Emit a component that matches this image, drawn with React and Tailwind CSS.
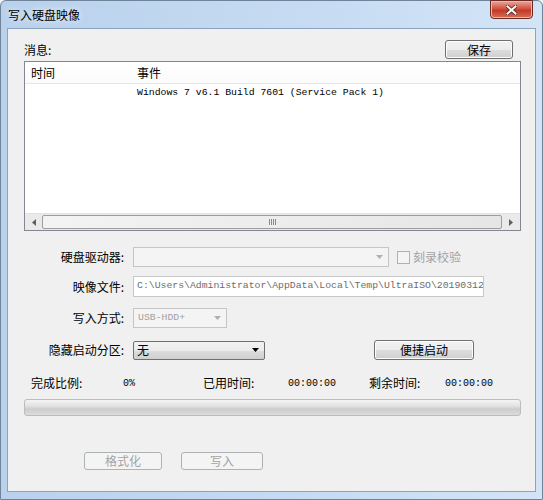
const cjk = { fontFamily: '"Noto Sans CJK SC", "Noto Sans", sans-serif' };
const mono = { fontFamily: '"Liberation Mono", monospace' };

const Btn = ({ children, disabled, className = '' }) => (
    <div
        className={`flex items-center justify-center rounded-[3px] border text-[12px] leading-none ${
            disabled
                ? 'border-[#adb2b5] bg-[#f4f4f4] text-[#a3a3a3]'
                : 'border-[#707070] bg-[linear-gradient(#f2f2f2_0%,#ebebeb_50%,#dddddd_51%,#cfcfcf_100%)] text-black shadow-[inset_0_0_0_1px_#fcfcfc]'
        } ${className}`}
        style={cjk}
    >
        {children}
    </div>
);

const Arrow = ({ color = '#000', size = 3 }) => (
    <svg width={size * 2 + 1} height={size + 1} viewBox={`0 0 ${size * 2 + 1} ${size + 1}`}>
        <polygon points={`0,0 ${size * 2 + 1},0 ${size + 0.5},${size + 1}`} fill={color} />
    </svg>
);

const Label = ({ children }) => (
    <div className="w-[101px] text-right text-[12px] text-black pr-[1px]" style={cjk}>
        {children}
    </div>
);

export default function App() {
    return (
        <div className="w-[543px] h-[500px] bg-[#eef3f8]">
            <div className="w-[543px] h-[500px] flex flex-col rounded-t-[6px] border border-[#6f8399] bg-[linear-gradient(90deg,#b9d1ec,#c7dcf3_60%,#d3e4f6)]">
                {/* title bar */}
                <div className="h-[27px] flex items-start justify-between pl-[7px] pr-[9px]">
                    <div className="pt-[5px] text-[12px] text-black [text-shadow:0_0_6px_#ffffff]" style={cjk}>
                        写入硬盘映像
                    </div>
                    <div className="w-[43px] h-[19px] -mt-[1px] rounded-b-[4px] border border-[#6b2b24] bg-[linear-gradient(#e9a99c,#d2523f_45%,#c23a28_55%,#d96e55)] flex items-center justify-center shadow-[inset_0_0_0_1px_#f0b7ab]">
                        <svg width="11" height="10" viewBox="0 0 11 10">
                            <path d="M1.5 1.5 L9.5 8.5 M9.5 1.5 L1.5 8.5" stroke="#4a1a14" strokeWidth="3.4" strokeLinecap="square" />
                            <path d="M1.5 1.5 L9.5 8.5 M9.5 1.5 L1.5 8.5" stroke="#ffffff" strokeWidth="2" strokeLinecap="square" />
                        </svg>
                    </div>
                </div>

                {/* client area */}
                <div className="mx-[6px] mb-[7px] flex-1 border border-[#8ba3bf] bg-[#f0f0f0] pl-[16px] pt-[11px]">
                    <div className="w-[497px] flex items-center justify-between">
                        <div className="text-[12px] text-black pt-[1px]" style={cjk}>消息:</div>
                        <Btn className="w-[68px] h-[19px] mr-[8px]">保存</Btn>
                    </div>

                    {/* list view */}
                    <div className="mt-[2px] w-[497px] h-[170px] border border-[#828790] bg-white flex flex-col">
                        <div className="h-[22px] flex items-center border-b border-[#e5e5e5] bg-[linear-gradient(#ffffff,#fbfbfb)] text-[12px]" style={cjk}>
                            <div className="w-[112px] pl-[6px]">时间</div>
                            <div>事件</div>
                        </div>
                        <div className="h-[16px] flex items-center pl-[112px] pt-[3px] text-[9.8px] text-black whitespace-pre" style={mono}>
                            Windows 7 v6.1 Build 7601 (Service Pack 1)
                        </div>
                        <div className="flex-1" />
                        <div className="h-[17px] flex bg-[#eaeaea] border-t border-[#e2e2e2]">
                            <div className="w-[17px] flex items-center justify-center">
                                <svg width="4" height="7" viewBox="0 0 4 7">
                                    <polygon points="4,0 4,7 0,3.5" fill="#606060" />
                                </svg>
                            </div>
                            <div className="flex-1 my-[1px] rounded-[2px] border border-[#9d9d9d] bg-[linear-gradient(90deg,#f3f3f3,#e6e6e6)] bg-[linear-gradient(#f5f5f5,#e5e5e5_50%,#d7d7d7_51%,#cfcfcf)] flex items-center justify-center">
                                <div className="flex gap-[1px]">
                                    <div className="w-[1px] h-[6px] bg-[#8a8a8a]" />
                                    <div className="w-[1px] h-[6px] bg-[#8a8a8a]" />
                                    <div className="w-[1px] h-[6px] bg-[#8a8a8a]" />
                                    <div className="w-[1px] h-[6px] bg-[#8a8a8a]" />
                                </div>
                            </div>
                            <div className="w-[18px] flex items-center justify-center">
                                <svg width="4" height="7" viewBox="0 0 4 7">
                                    <polygon points="0,0 0,7 4,3.5" fill="#606060" />
                                </svg>
                            </div>
                        </div>
                    </div>

                    {/* row 1 */}
                    <div className="mt-[16px] flex items-center">
                        <Label>硬盘驱动器:</Label>
                        <div className="ml-[8px] w-[256px] h-[20px] border border-[#c5c5c5] bg-[#f4f4f4] flex items-center justify-end pr-[5px]">
                            <Arrow color="#b0b0b0" size={3} />
                        </div>
                        <div className="ml-[8px] w-[13px] h-[13px] border border-[#b1b1b1] bg-[#f4f4f4]" />
                        <div className="ml-[3px] text-[12px] text-[#a3a3a3]" style={cjk}>刻录校验</div>
                    </div>

                    {/* row 2 */}
                    <div className="mt-[9px] flex items-center">
                        <Label>映像文件:</Label>
                        <div className="ml-[8px] w-[351px] h-[21px] border border-[#c7c7c7] bg-white overflow-hidden flex items-center pl-[3px] text-[9.8px] text-[#6d6d6d] whitespace-pre" style={mono}>
                            C:\Users\Administrator\AppData\Local\Temp\UltraISO\20190312
                        </div>
                    </div>

                    {/* row 3 */}
                    <div className="mt-[11px] flex items-center">
                        <Label>写入方式:</Label>
                        <div className="ml-[8px] w-[94px] h-[20px] border border-[#c5c5c5] bg-[#f4f4f4] flex items-center justify-between pl-[4px] pr-[5px]">
                            <span className="text-[9.8px] text-[#a0a0a0]" style={mono}>USB-HDD+</span>
                            <Arrow color="#b0b0b0" size={3} />
                        </div>
                    </div>

                    {/* row 4 */}
                    <div className="mt-[12px] flex items-center">
                        <Label>隐藏启动分区:</Label>
                        <div className="ml-[8px] w-[132px] h-[19px] rounded-[2px] border border-[#707070] bg-[linear-gradient(#f2f2f2_0%,#ebebeb_50%,#dddddd_51%,#cfcfcf_100%)] flex items-center justify-between pl-[3px] pr-[5px]">
                            <span className="text-[12px] text-black" style={cjk}>无</span>
                            <Arrow color="#000" size={3} />
                        </div>
                        <Btn className="ml-[109px] w-[100px] h-[20px]">便捷启动</Btn>
                    </div>

                    {/* stats */}
                    <div className="mt-[14px] flex items-center pl-[7px] text-black" style={cjk}>
                        <div className="w-[92px] text-[12px]">完成比例:</div>
                        <div className="w-[80px] text-[10px]" style={mono}>0%</div>
                        <div className="w-[85px] text-[12px]">已用时间:</div>
                        <div className="w-[81px] text-[10px]" style={mono}>00:00:00</div>
                        <div className="w-[76px] text-[12px]">剩余时间:</div>
                        <div className="text-[10px]" style={mono}>00:00:00</div>
                    </div>

                    {/* progress */}
                    <div className="mt-[7px] w-[497px] h-[17px] rounded-[3px] border border-[#bcbcbc] bg-[linear-gradient(#f4f4f4,#e2e2e2_40%,#cdcdcd_60%,#dcdcdc)]" />

                    {/* buttons */}
                    <div className="mt-[36px] flex pl-[60px] gap-[19px]">
                        <Btn disabled className="w-[78px] h-[18px]">格式化</Btn>
                        <Btn disabled className="w-[82px] h-[18px]">写入</Btn>
                    </div>
                </div>
            </div>
        </div>
    );
}
